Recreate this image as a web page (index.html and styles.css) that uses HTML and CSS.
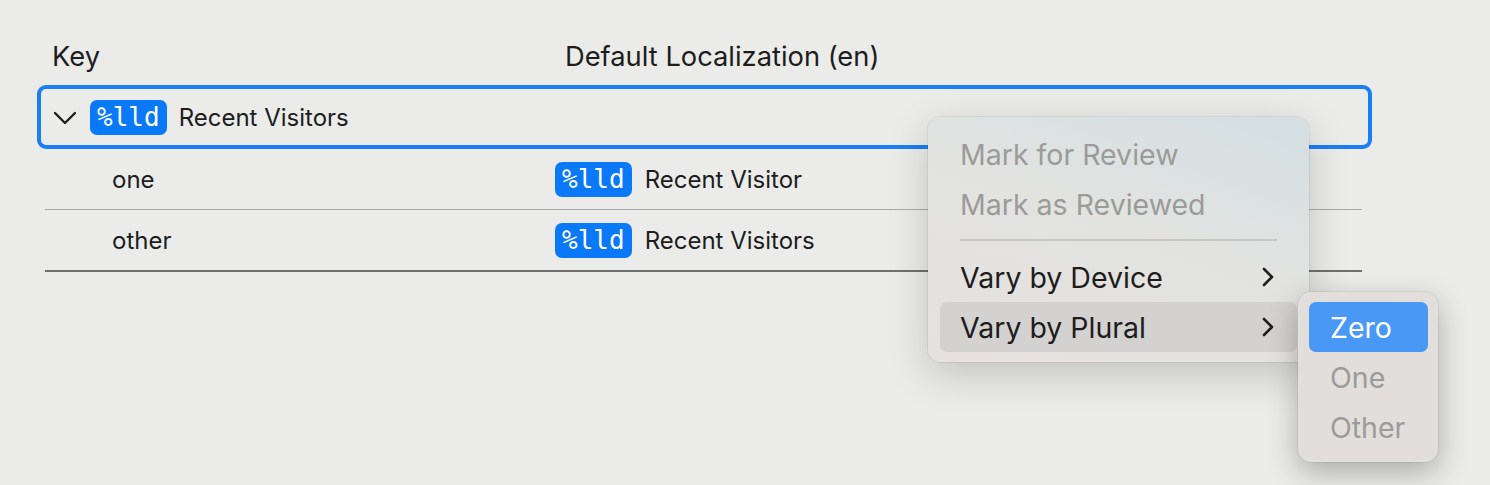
FILE: index.html
```html
<!DOCTYPE html>
<html lang="en">
<head>
    <meta charset="UTF-8">
    <title>Localizable Strings</title>
    <link rel="stylesheet" href="styles.css">
</head>
<body>
    <div class="table">
        <!-- Kopfzeile -->
        <div class="row header">
            <div class="col-key">Key</div>
            <div class="col-value">Default Localization (en)</div>
        </div>

        <!-- Ausgewaehlte Gruppe -->
        <div class="group selected">
            <svg class="chevron" width="24" height="14" viewBox="0 0 24 14">
                <path d="M2 2 L12 12 L22 2" fill="none" stroke="#1f1f1f" stroke-width="2.4" stroke-linecap="round" stroke-linejoin="round"/>
            </svg>
            <span class="token">%lld</span>
            <span class="label">Recent Visitors</span>
        </div>

        <div class="row child">
            <div class="col-key">one</div>
            <div class="col-value"><span class="token">%lld</span><span class="label">Recent Visitor</span></div>
        </div>
        <div class="row child last">
            <div class="col-key">other</div>
            <div class="col-value"><span class="token">%lld</span><span class="label">Recent Visitors</span></div>
        </div>
    </div>

    <!-- Kontextmenue -->
    <div class="menu">
        <div class="item disabled">Mark for Review</div>
        <div class="item disabled">Mark as Reviewed</div>
        <div class="separator"></div>
        <div class="item">Vary by Device
            <svg class="arrow" width="14" height="20" viewBox="0 0 14 20"><path d="M3 2 L11 10 L3 18" fill="none" stroke="#1f1f1f" stroke-width="2.6" stroke-linecap="round" stroke-linejoin="round"/></svg>
        </div>
        <div class="item hover">Vary by Plural
            <svg class="arrow" width="14" height="20" viewBox="0 0 14 20"><path d="M3 2 L11 10 L3 18" fill="none" stroke="#1f1f1f" stroke-width="2.6" stroke-linecap="round" stroke-linejoin="round"/></svg>
        </div>
    </div>

    <div class="menu submenu">
        <div class="item active">Zero</div>
        <div class="item disabled">One</div>
        <div class="item disabled">Other</div>
    </div>
</body>
</html>
```

FILE: styles.css
```css
body {
    margin: 0;
    width: 1490px;
    height: 485px;
    overflow: hidden;
    background-color: #ebecea;
    color: #1d1d1d;
    font-family: Inter, "Noto Sans", sans-serif;
    font-size: 24px;
    position: relative;
}
.table {
    padding: 30px 128px 0 45px;
}
.row {
    display: flex;
    align-items: center;
}
.col-key {
    width: 510px;
    flex: none;
}
.col-value {
    display: flex;
    align-items: center;
}
.header {
    height: 53px;
    font-size: 27.3px;
    padding-bottom: 2px;
}
.header .col-key {
    padding-left: 7px;
    width: 503px;
}
.header .col-value {
    padding-left: 10px;
}
.group {
    display: flex;
    align-items: center;
    height: 55px;
    margin: 0 -10px 0 -8px;
    padding-left: 12px;
    padding-top: 1px;
    border: 4px solid #1a7ef5;
    border-radius: 9px;
}
.chevron {
    margin-right: 13px;
}
.token {
    display: inline-block;
    background-color: #0a79f7;
    color: white;
    font-family: "DejaVu Sans Mono", monospace;
    font-size: 26px;
    line-height: 35px;
    padding: 0 7px;
    border-radius: 7px;
}
.label {
    margin-left: 13px;
}
.group .label {
    margin-left: 12px;
}
.child {
    height: 60px;
    border-bottom: 1px solid #a9a9a9;
}
.child .col-key {
    padding-left: 67px;
    width: 443px;
}
.child.last {
    border-bottom: 2px solid #707070;
}
.menu {
    position: absolute;
    left: 928px;
    top: 117px;
    width: 381px;
    box-sizing: border-box;
    padding: 12px 12px 10px 12px;
    border-radius: 13px;
    background: linear-gradient(200deg, #d3dfe2 0%, #e2e3e1 45%, #e5e1de 100%);
    box-shadow: 0 12px 40px rgba(0, 0, 0, 0.18), 0 0 0 1px rgba(0, 0, 0, 0.06);
    font-size: 28.5px;
}
.item {
    display: flex;
    align-items: center;
    justify-content: space-between;
    height: 50px;
    padding: 0 20px;
    border-radius: 7px;
}
.item.disabled {
    color: #9b9b99;
}
.item.hover {
    background-color: #d4d2d1;
}
.separator {
    height: 2px;
    margin: 10px 20px 11px 20px;
    background-color: #c8c8c6;
}
.arrow {
    margin-right: 2px;
}
.submenu {
    left: 1298px;
    top: 292px;
    width: 140px;
    padding: 10px 10px 10px 11px;
    background: #e1dedb;
    box-shadow: 0 10px 30px rgba(0, 0, 0, 0.28), 0 0 0 1px rgba(0, 0, 0, 0.05);
}
.submenu .item {
    padding: 0 21px;
}
.item.active {
    background-color: #4a98f5;
    color: white;
}
```
